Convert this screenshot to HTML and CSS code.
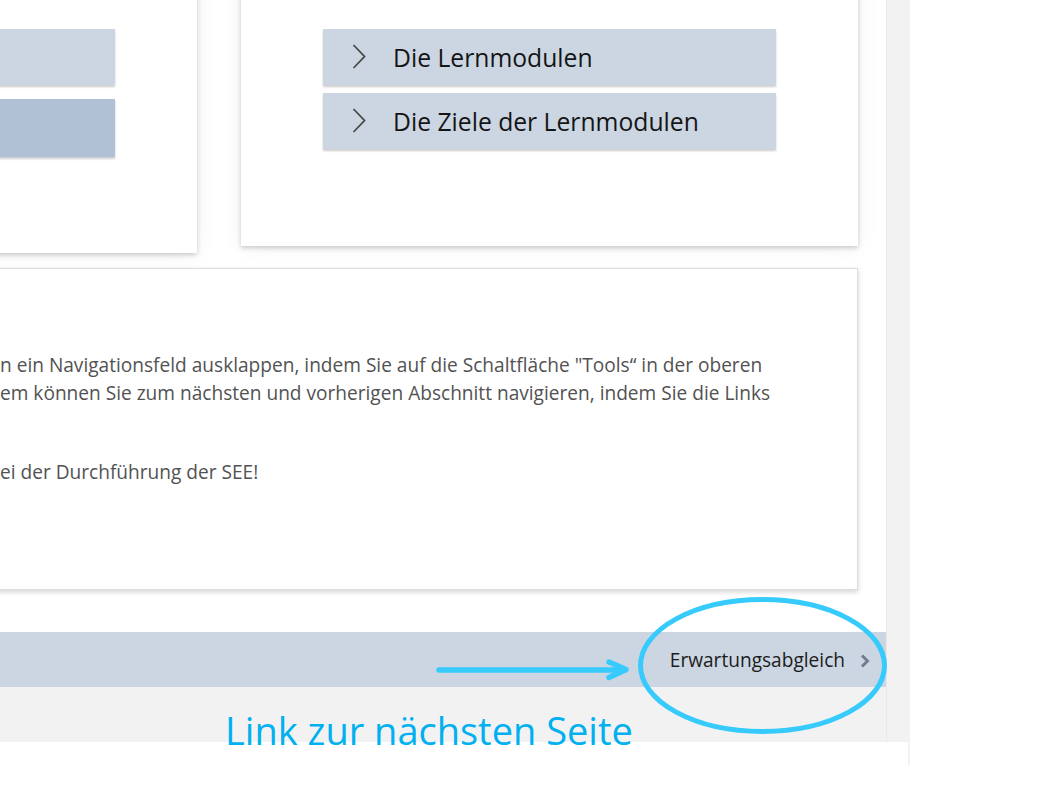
FILE: index.html
```html
<!DOCTYPE html>
<html lang="de">
<head>
<meta charset="utf-8">
<title>Lernmodule</title>
<link rel="stylesheet" href="styles.css">
</head>
<body>
<div class="frame">
  <div class="inner">
    <div class="top">
      <main class="main">
        <div class="stage">
          <div class="cards-row">
            <section class="card card-left">
              <div class="btn-col btn-col-left">
                <div class="acc-btn"></div>
                <div class="acc-btn active"></div>
              </div>
            </section>
            <section class="card card-right">
              <div class="btn-col">
                <div class="acc-btn">
                  <svg class="chev" width="14" height="25" viewBox="0 0 14 25"><polyline points="1.5,1 12.5,12.5 1.5,24" fill="none" stroke="#474747" stroke-width="1.8"/></svg>
                  <span class="acc-label">Die Lernmodulen</span>
                </div>
                <div class="acc-btn">
                  <svg class="chev" width="14" height="25" viewBox="0 0 14 25"><polyline points="1.5,1 12.5,12.5 1.5,24" fill="none" stroke="#474747" stroke-width="1.8"/></svg>
                  <span class="acc-label">Die Ziele der Lernmodulen</span>
                </div>
              </div>
            </section>
          </div>
          <section class="text-card">
            <p class="txt">n ein Navigationsfeld ausklappen, indem Sie auf die Schaltfläche "Tools“ in der oberen<br>em können Sie zum nächsten und vorherigen Abschnitt navigieren, indem Sie die Links</p>
            <p class="txt txt2">ei der Durchführung der SEE!</p>
          </section>
        </div>
        <nav class="navbar">
          <a class="next-link">Erwartungsabgleich</a>
          <svg class="nav-chev" width="10" height="14" viewBox="0 0 10 14"><polyline points="2,1.5 7.5,7 2,12.5" fill="none" stroke="#6f7d8f" stroke-width="3"/></svg>
        </nav>
        <div class="footer"></div>
      </main>
      <div class="rail"></div>
    </div>
    <div class="bottom"></div>
  </div>
</div>

<svg class="annot" width="1063" height="790" viewBox="0 0 1063 790">
  <line x1="439" y1="670" x2="625" y2="670" stroke="#36cbfc" stroke-width="5.5" stroke-linecap="round"/>
  <polyline points="609,662 626,669.5 609,677.5" fill="none" stroke="#36cbfc" stroke-width="5.5" stroke-linecap="round" stroke-linejoin="round"/>
  <ellipse cx="762.5" cy="665.5" rx="122" ry="66" fill="none" stroke="#36cbfc" stroke-width="5"/>
</svg>
<div class="annot-text">Link zur nächsten Seite</div>
</body>
</html>
```

FILE: styles.css
```css
html, body {
  margin: 0;
  padding: 0;
  background: #ffffff;
  overflow: hidden;
  font-family: "Open Sans", "Noto Sans", sans-serif;
}

.frame {
  width: 910px;
  height: 765px;
  background: #f2f2f2;
}

.inner {
  width: 908px;
  display: flex;
  flex-direction: column;
}

.top {
  display: flex;
  height: 742px;
}

.main {
  width: 886px;
  height: 742px;
  background: #ffffff;
  display: flex;
  flex-direction: column;
}

.rail {
  width: 21px;
  background: #f2f2f2;
  border-left: 1px solid #e9e9e9;
}

.bottom {
  height: 23px;
  background: #ffffff;
}

.stage {
  margin-top: -40px;
  margin-left: -420px;
  width: 1278px;
  display: flex;
  flex-direction: column;
}

.cards-row {
  display: flex;
  gap: 44px;
  align-items: flex-start;
}

.card {
  width: 617px;
  background: #ffffff;
  box-shadow: 0 2px 5px rgba(0, 0, 0, 0.2), 0 0 24px rgba(0, 0, 0, 0.05);
  display: flex;
  justify-content: center;
  padding-top: 69px;
  box-sizing: border-box;
}

.card-left {
  height: 293px;
}

.card-right {
  height: 286px;
}

.btn-col {
  width: 453px;
  display: flex;
  flex-direction: column;
  gap: 8px;
}

.btn-col-left {
  gap: 14px;
}

.acc-btn {
  height: 56px;
  background: #cbd6e2;
  box-shadow: 0 2px 2px rgba(0, 0, 0, 0.2);
  display: flex;
  align-items: center;
  padding-left: 29px;
  box-sizing: border-box;
}

.acc-btn.active {
  height: 58px;
  background: #b0c1d6;
}

.chev {
  flex: none;
  margin-top: -1px;
}

.acc-label {
  margin-left: 27px;
  font-size: 24.7px;
  color: #151515;
  white-space: nowrap;
  margin-top: 1px;
}

.text-card {
  margin-top: 15px;
  height: 322px;
  box-sizing: border-box;
  background: #ffffff;
  border: 1px solid #dedede;
  box-shadow: 0 2px 5px rgba(0, 0, 0, 0.18);
  padding: 82px 0 0 419px;
}

.txt {
  margin: 0;
  font-size: 19.1px;
  line-height: 28px;
  color: #525252;
  white-space: nowrap;
}

.txt2 {
  margin-top: 51px;
}

.navbar {
  margin-top: 42px;
  height: 55px;
  flex: none;
  background: #cbd6e2;
  display: flex;
  justify-content: flex-end;
  align-items: center;
  padding-right: 16px;
  gap: 15px;
}

.next-link {
  font-size: 19.1px;
  color: #1c1c1c;
  margin-top: 1px;
}

.nav-chev {
  margin-top: 2px;
}

.footer {
  flex: 1;
  background: #f2f2f2;
}

.annot {
  position: absolute;
  left: 0;
  top: 0;
  pointer-events: none;
}

.annot-text {
  position: absolute;
  left: 225px;
  top: 704px;
  font-size: 38px;
  line-height: 52px;
  color: #00b0f0;
  white-space: nowrap;
}
```
